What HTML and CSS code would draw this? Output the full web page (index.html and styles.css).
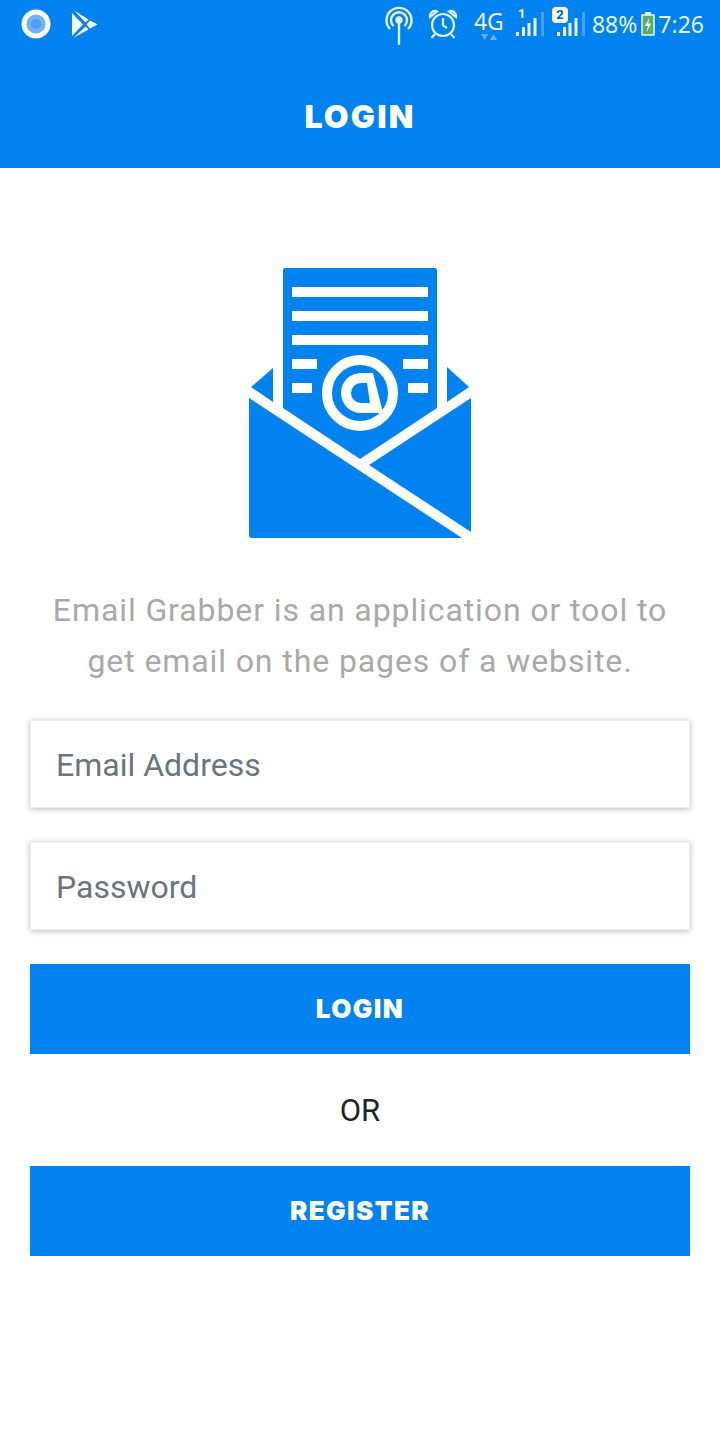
FILE: index.html
```html
<!DOCTYPE html>
<html lang="en">
<head>
    <meta charset="UTF-8">
    <meta name="viewport" content="width=device-width, initial-scale=1.0">
    <title>Login</title>
    <link rel="stylesheet" href="styles.css">
</head>
<body>
    <div class="header">
        <div class="status-bar">
            <div class="status-left">
                <svg class="icon-record" width="30" height="30" viewBox="0 0 30 30">
                    <circle cx="15" cy="15" r="14.5" fill="#fff"/>
                    <circle cx="15" cy="15" r="9.5" fill="#6fb2f6"/>
                    <circle cx="15" cy="15" r="5" fill="#4a9ff5"/>
                </svg>
                <svg class="icon-play" width="26" height="28" viewBox="0 0 26 28" fill="#fff">
                    <path d="M0 3V26L11 14.500Z"/>
                    <path d="M2 0.500L13.500 12.500L16.500 9.500Z"/>
                    <path d="M2 27.500L13.500 16.500L16.500 19.500Z"/>
                    <path d="M18 10.500L25.500 14.500L18 18.500L14.500 14.500Z"/>
                </svg>
            </div>
            <div class="status-right">
                <svg class="icon-antenna" width="28" height="42" viewBox="0 0 28 42" fill="none" stroke="#e6f3fe" stroke-width="2.400">
                    <circle cx="14" cy="16" r="2.500" fill="#e6f3fe"/>
                    <path d="M14 18V41"/>
                    <path d="M8.500 22A8 8 0 1 1 19.500 22"/>
                    <path d="M5 25A12.500 12.500 0 1 1 23 25"/>
                </svg>
                <svg class="icon-alarm" width="30" height="30" viewBox="0 0 30 30" fill="none" stroke="#e6f3fe" stroke-width="2.200">
                    <circle cx="15" cy="16" r="11"/>
                    <path d="M15 9V16.500L19 19"/>
                    <path d="M2 8A5 5 0 0 1 9 2.500Z"/>
                    <path d="M28 8A5 5 0 0 0 21 2.500Z"/>
                    <path d="M7 25L3.500 29M23 25L26.500 29"/>
                </svg>
                <div class="network">
                    <span class="network-label">4G</span>
                    <svg width="18" height="7" viewBox="0 0 18 7" fill="#6fb2f6">
                        <path d="M1 0H8L4.500 6Z"/>
                        <path d="M10 6H17L13.500 0Z"/>
                    </svg>
                </div>
                <div class="sim sim-one">
                    <span class="sim-number">1</span>
                    <svg class="signal" width="28" height="26" viewBox="0 0 28 26">
                        <g fill="#e6f3fe">
                            <rect x="0" y="21" width="3" height="4"/>
                            <rect x="6" y="16" width="3" height="9"/>
                            <rect x="11.500" y="12" width="3" height="13"/>
                            <rect x="17.500" y="7" width="3" height="18"/>
                        </g>
                        <rect x="25" y="1" width="3" height="24" fill="#4a9ff5"/>
                    </svg>
                </div>
                <div class="sim sim-two">
                    <span class="sim-number sim-badge">2</span>
                    <svg class="signal" width="28" height="26" viewBox="0 0 28 26">
                        <g fill="#e6f3fe">
                            <rect x="0" y="21" width="3" height="4"/>
                            <rect x="6" y="16" width="3" height="9"/>
                            <rect x="11.500" y="12" width="3" height="13"/>
                            <rect x="17.500" y="7" width="3" height="18"/>
                        </g>
                        <rect x="25" y="1" width="3" height="24" fill="#4a9ff5"/>
                    </svg>
                </div>
                <span class="status-text">88%</span>
                <svg class="icon-battery" width="14" height="24" viewBox="0 0 14 24">
                    <rect x="4" y="0" width="6" height="3" fill="#e6f3fe"/>
                    <rect x="1" y="3" width="12" height="20" fill="#5cab68" stroke="#e6f3fe" stroke-width="1.500"/>
                    <path d="M8.500 5.500L4 14H7L5.500 20.500L10 11.500H7Z" fill="#fff"/>
                </svg>
                <span class="status-text">7:26</span>
            </div>
        </div>
        <h1 class="title">LOGIN</h1>
    </div>

    <div class="content">
        <svg class="mail-icon" width="222" height="270" viewBox="9 8 222 270">
            <path d="M45 8H195Q197 8 197 10V148L120 199L43 148V10Q43 8 45 8Z" fill="#0082f0"/>
            <g fill="#fff">
                <rect x="52" y="27" width="136" height="10"/>
                <rect x="52" y="51" width="136" height="10"/>
                <rect x="52" y="75" width="136" height="10"/>
                <rect x="52" y="99" width="25" height="10"/>
                <rect x="52" y="123" width="20" height="10"/>
                <rect x="163" y="99" width="25" height="10"/>
                <rect x="168" y="123" width="20" height="10"/>
            </g>
            <circle cx="120" cy="133" r="33" fill="#0082f0" stroke="#fff" stroke-width="10"/>
            <path d="M133 113H121A20 20 0 0 0 121 153H143ZM127 123H121A10 10 0 0 0 121 143H130Z" fill="#fff" fill-rule="evenodd"/>
            <path d="M33 108V142L11 127Z" fill="#0082f0"/>
            <path d="M207 107V142L229 127Z" fill="#0082f0"/>
            <path d="M9 138L222 278H12Q9 278 9 275Z" fill="#0082f0"/>
            <path d="M129 205L231 138V272Z" fill="#0082f0"/>
        </svg>
        <p class="intro">Email Grabber is an application or tool to get email on the pages of a website.</p>
        <form class="login-form">
            <input class="field" type="text" placeholder="Email Address">
            <input class="field" type="password" placeholder="Password">
            <button class="action" type="button">LOGIN</button>
            <div class="or">OR</div>
            <button class="action" type="button">REGISTER</button>
        </form>
    </div>
</body>
</html>
```

FILE: styles.css
```css
body {
    margin: 0;
    background: #fff;
    font-family: Roboto, Arial, sans-serif;
    color: #212529;
}
.header {
    height: 168px;
    background: #0082f0;
}
.status-bar {
    height: 48px;
    display: flex;
    justify-content: space-between;
    align-items: center;
    padding: 0 16px 0 21px;
    color: #e6f3fe;
}
.status-left {
    display: flex;
    align-items: center;
    gap: 21px;
}
.status-right {
    display: flex;
    align-items: center;
}
.icon-antenna {
    margin-right: 15px;
    margin-top: 2px;
}
.icon-alarm {
    margin-right: 16px;
}
.network {
    display: flex;
    flex-direction: column;
    align-items: center;
    width: 30px;
    margin-right: 12px;
}
.network-label {
    font-family: "Noto Sans", sans-serif;
    font-size: 23px;
    line-height: 26px;
}
.sim {
    position: relative;
    height: 36px;
}
.sim-one {
    margin-right: 8px;
}
.sim-two {
    margin-right: 7px;
    padding-left: 5px;
}
.signal {
    display: block;
    margin-top: 5px;
}
.sim-number {
    position: absolute;
    top: 1px;
    left: 2px;
    font-size: 13px;
    font-weight: 700;
    line-height: 14px;
}
.sim-badge {
    top: 1px;
    left: 0;
    width: 16px;
    height: 16px;
    line-height: 16px;
    text-align: center;
    border-radius: 4px;
    background: #f2f8fe;
    color: #0a5fb0;
}
.status-text {
    font-family: "Noto Sans", sans-serif;
    font-size: 23px;
    line-height: 30px;
}
.icon-battery {
    margin: 0 3px 0 4px;
}
.title {
    margin: 0;
    height: 120px;
    padding-top: 48px;
    box-sizing: border-box;
    text-align: center;
    color: #fff;
    font-family: Inter, sans-serif;
    font-size: 32px;
    font-weight: 900;
    letter-spacing: 2.2px;
    line-height: 42px;
}
.content {
    padding: 100px 30px 0;
    display: flex;
    flex-direction: column;
    align-items: center;
}
.mail-icon {
    display: block;
}
.intro {
    max-width: 630px;
    margin: 47px 0 33px;
    text-align: center;
    font-size: 32px;
    letter-spacing: 0.9px;
    line-height: 51px;
    color: #a9a9a9;
}
.login-form {
    width: 100%;
    display: flex;
    flex-direction: column;
}
.field {
    height: 88px;
    box-sizing: border-box;
    margin-bottom: 34px;
    padding: 2px 25px 0;
    border: 1px solid #eee;
    background: #fff;
    box-shadow: 0 1px 6px rgba(0, 0, 0, 0.28);
    font-family: Roboto, sans-serif;
    font-size: 32px;
    outline: none;
}
.field::placeholder {
    color: #6c757d;
    opacity: 1;
}
.action {
    height: 90px;
    border: none;
    background: #0082f0;
    color: #fff;
    font-family: Inter, sans-serif;
    font-size: 26px;
    font-weight: 900;
    letter-spacing: 1.4px;
    padding-bottom: 3px;
}
.or {
    height: 112px;
    line-height: 114px;
    text-align: center;
    font-size: 31px;
}
```
